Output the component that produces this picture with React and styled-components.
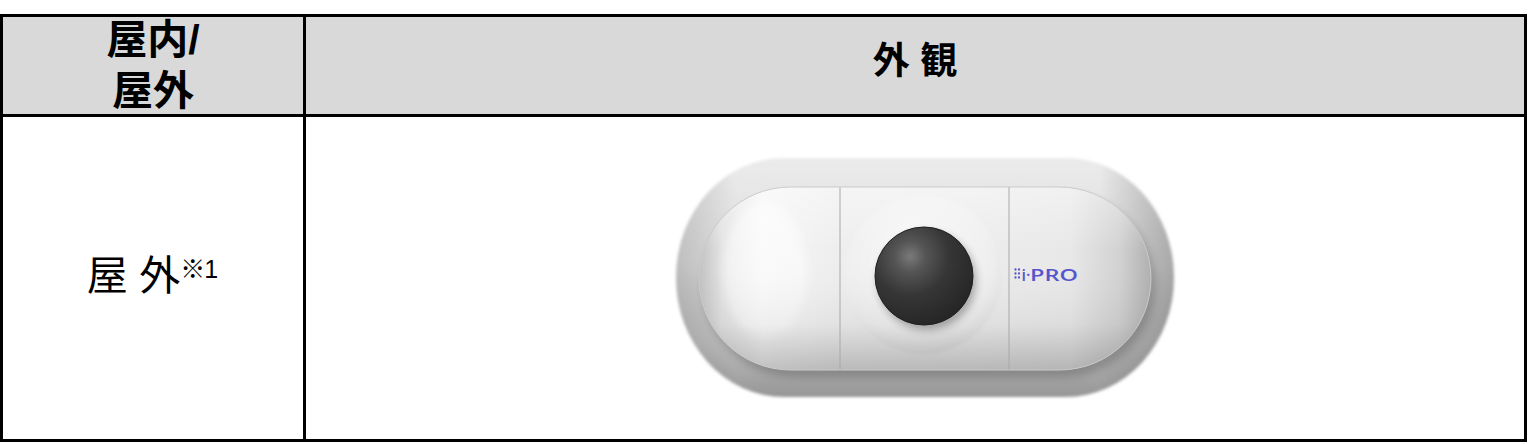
import React from "react";
import styled, { createGlobalStyle } from "styled-components";

const GlobalStyle = createGlobalStyle`
  html, body {
    margin: 0;
    padding: 0;
    background: #ffffff;
  }
`;

const Page = styled.div`
  padding-top: 14px;
  width: 1529px;
`;

const Table = styled.div`
  box-sizing: border-box;
  width: 1527px;
  border: 3px solid #000;
  display: grid;
  grid-template-columns: 303px 1fr;
  grid-template-rows: 100px 322px;
  font-family: "Liberation Sans", "Noto Sans CJK JP", sans-serif;
  color: #000;
`;

const Cell = styled.div`
  box-sizing: border-box;
  display: flex;
  align-items: center;
  justify-content: center;
  text-align: center;
  background: ${p => (p.$head ? "#d9d9d9" : "#ffffff")};
  border-right: ${p => (p.$last ? "none" : "3px solid #000")};
  border-bottom: ${p => (p.$head ? "3px solid #000" : "none")};
  overflow: visible;
`;

const HeadText = styled.div`
  font-weight: 700;
  font-size: ${p => p.$size || 41}px;
  line-height: ${p => p.$lh || 51}px;
  margin-top: ${p => p.$shift || 0}px;
`;

const BodyText = styled.div`
  font-weight: 400;
  font-size: 41px;
  line-height: 50px;
  margin-top: -4px;
  margin-left: -2px;
`;

const Note = styled.sup`
  font-size: 25px;
  vertical-align: 12px;
  line-height: 0;
  letter-spacing: -1px;
`;

const CameraBox = styled.div`
  width: 520px;
  height: 240px;
`;

function Camera() {
  return (
    <svg width="520" height="240" viewBox="0 0 520 240" style={{ overflow: "visible" }}>
      <defs>
        <linearGradient id="baseV" x1="0" y1="0" x2="0" y2="1">
          <stop offset="0" stopColor="#ebebeb" />
          <stop offset="0.45" stopColor="#dcdcdc" />
          <stop offset="0.78" stopColor="#bdbdbd" />
          <stop offset="1" stopColor="#959595" />
        </linearGradient>
        <linearGradient id="baseH" x1="0" y1="0" x2="1" y2="0">
          <stop offset="0" stopColor="#000" stopOpacity="0.14" />
          <stop offset="0.12" stopColor="#000" stopOpacity="0" />
          <stop offset="0.85" stopColor="#000" stopOpacity="0" />
          <stop offset="1" stopColor="#000" stopOpacity="0.24" />
        </linearGradient>
        <linearGradient id="pillH" x1="0" y1="0" x2="1" y2="0">
          <stop offset="0" stopColor="#c2c2c2" />
          <stop offset="0.05" stopColor="#e2e2e2" />
          <stop offset="0.14" stopColor="#f6f6f6" />
          <stop offset="0.3" stopColor="#eeeeee" />
          <stop offset="0.6" stopColor="#ececec" />
          <stop offset="0.82" stopColor="#e8e8e8" />
          <stop offset="0.93" stopColor="#d2d2d2" />
          <stop offset="1" stopColor="#b0b0b0" />
        </linearGradient>
        <linearGradient id="pillV" x1="0" y1="0" x2="0" y2="1">
          <stop offset="0" stopColor="#fff" stopOpacity="0.4" />
          <stop offset="0.35" stopColor="#fff" stopOpacity="0" />
          <stop offset="0.75" stopColor="#000" stopOpacity="0.05" />
          <stop offset="1" stopColor="#000" stopOpacity="0.22" />
        </linearGradient>
        <radialGradient id="halo" cx="0.45" cy="0.4" r="0.6">
          <stop offset="0" stopColor="#f8f8f8" />
          <stop offset="0.8" stopColor="#efefef" />
          <stop offset="1" stopColor="#e4e4e4" />
        </radialGradient>
        <radialGradient id="lens" cx="0.36" cy="0.3" r="0.72">
          <stop offset="0" stopColor="#7a7a7a" />
          <stop offset="0.22" stopColor="#555" />
          <stop offset="0.55" stopColor="#363636" />
          <stop offset="1" stopColor="#262626" />
        </radialGradient>
        <clipPath id="pillClip">
          <rect x="44" y="29" width="452" height="183" rx="91.5" />
        </clipPath>
        <filter id="soft" x="-10%" y="-10%" width="120%" height="120%">
          <feGaussianBlur stdDeviation="1.6" />
        </filter>
        <filter id="blur4" x="-30%" y="-30%" width="160%" height="160%">
          <feGaussianBlur stdDeviation="4" />
        </filter>
      </defs>

      <g filter="url(#soft)">
        <rect x="21" y="0" width="498" height="239" rx="108" ry="119" fill="url(#baseV)" />
        <rect x="21" y="0" width="498" height="239" rx="108" ry="119" fill="url(#baseH)" />
      </g>

      <rect x="48" y="36" width="452" height="183" rx="91.5" fill="#000" opacity="0.2" filter="url(#blur4)" />

      <g clipPath="url(#pillClip)">
        <rect x="44" y="29" width="452" height="183" fill="url(#pillH)" />
        <ellipse cx="110" cy="112" rx="42" ry="68" fill="#fff" opacity="0.5" filter="url(#blur4)" />
        <circle cx="268" cy="117" r="79" fill="url(#halo)" filter="url(#soft)" />
        <rect x="44" y="29" width="452" height="183" fill="url(#pillV)" />
        <line x1="185" y1="29" x2="185" y2="212" stroke="#a8a8a8" strokeWidth="1" />
        <line x1="354" y1="29" x2="354" y2="212" stroke="#a8a8a8" strokeWidth="1" />
      </g>
      <rect x="44" y="29" width="452" height="183" rx="91.5" fill="none" stroke="#cbcbcb" strokeWidth="1" />

      <circle cx="272" cy="123" r="49" fill="#000" opacity="0.3" filter="url(#blur4)" />
      <circle cx="269" cy="118" r="49" fill="url(#lens)" stroke="#1f1f1f" strokeWidth="1" />

      <g fill="#5656cc">
        {[360.5, 364].map(x =>
          [111.5, 115.5, 119.5].map(y => <circle key={`${x}-${y}`} cx={x} cy={y} r="1.15" />)
        )}
        <text x="366.5" y="122.5" fontFamily="'Open Sans', sans-serif" fontWeight="600" fontSize="16">
          i·
        </text>
        <text
          x="375"
          y="122.5"
          fontFamily="'Open Sans', sans-serif"
          fontWeight="600"
          fontSize="16.5"
          textLength="48"
          lengthAdjust="spacingAndGlyphs"
        >
          PRO
        </text>
      </g>
    </svg>
  );
}

export default function App() {
  return (
    <Page>
      <GlobalStyle />
      <Table>
        <Cell $head>
          <HeadText $size={41} $lh={51}>
            屋内/
            <br />
            屋外
          </HeadText>
        </Cell>
        <Cell $head $last>
          <HeadText $size={37} $lh={44} $shift={-8}>
            外 観
          </HeadText>
        </Cell>
        <Cell>
          <BodyText>
            屋 外<Note>※1</Note>
          </BodyText>
        </Cell>
        <Cell $last>
          <CameraBox>
            <Camera />
          </CameraBox>
        </Cell>
      </Table>
    </Page>
  );
}
